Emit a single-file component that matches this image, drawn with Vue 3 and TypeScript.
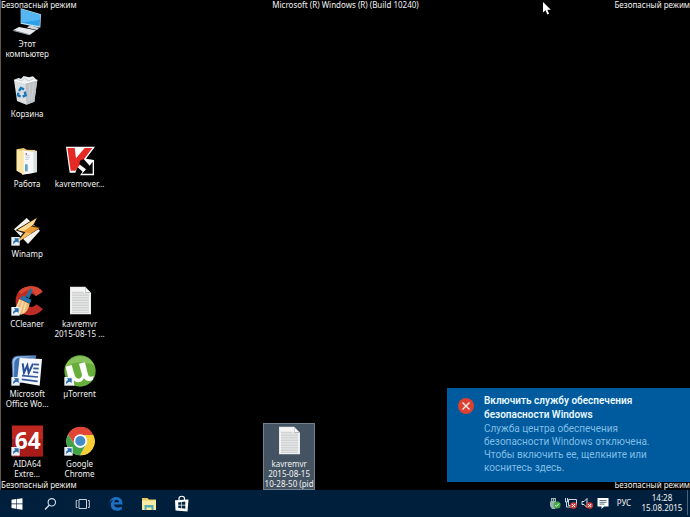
<script setup lang="ts">
type IconKind =
  | 'computer' | 'bin' | 'folder' | 'kaspersky' | 'winamp' | 'ccleaner'
  | 'text' | 'word' | 'utorrent' | 'aida' | 'chrome'

interface DesktopItem {
  icon: IconKind
  lines: string[]
  col: number
  row: number
  shortcut?: boolean
  selected?: boolean
}

const items: DesktopItem[] = [
  { icon: 'computer', lines: ['Этот', 'компьютер'], col: 1, row: 1 },
  { icon: 'bin', lines: ['Корзина'], col: 1, row: 2 },
  { icon: 'folder', lines: ['Работа'], col: 1, row: 3 },
  { icon: 'winamp', lines: ['Winamp'], col: 1, row: 4, shortcut: true },
  { icon: 'ccleaner', lines: ['CCleaner'], col: 1, row: 5, shortcut: true },
  { icon: 'word', lines: ['Microsoft', 'Office Wo...'], col: 1, row: 6, shortcut: true },
  { icon: 'aida', lines: ['AIDA64', 'Extre...'], col: 1, row: 7, shortcut: true },
  { icon: 'kaspersky', lines: ['kavremover...'], col: 2, row: 3 },
  { icon: 'text', lines: ['kavremvr', '2015-08-15 ...'], col: 2, row: 5 },
  { icon: 'utorrent', lines: ['µTorrent'], col: 2, row: 6, shortcut: true },
  { icon: 'chrome', lines: ['Google', 'Chrome'], col: 2, row: 7, shortcut: true },
  { icon: 'text', lines: ['kavremvr', '2015-08-15', '10-28-50 (pid'], col: 6, row: 7, selected: true },
]

const rules = [22, 27, 32, 37, 42, 47, 52, 57, 62, 67, 72, 77, 82]
</script>

<template>
  <div class="screen">
    <main class="desktop">
      <button
        v-for="item in items"
        :key="item.icon + item.col + item.row"
        type="button"
        class="item"
        :class="{ selected: item.selected }"
        :style="{ gridColumn: item.col, gridRow: item.row }"
      >
        <svg class="icon" viewBox="0 0 96 96" aria-hidden="true">
          <g v-if="item.icon === 'computer'">
            <path d="M29 10 90 28 88 68 29 56Z" fill="#c4e4f6" />
            <path d="M31 13 88 30 86 64 31 53Z" fill="#2f9fe8" />
            <path d="M31 13 88 30 86 44 31 53Z" fill="#54b7f3" />
            <path d="M56 61 66 63 84 69 78 75 48 68Z" fill="#cfd6da" />
            <path d="M7 75 24 66 75 76 56 90Z" fill="#e7ebed" />
            <path d="M7 75 56 88v3L7 78Z" fill="#9da7ad" />
          </g>
          <g v-else-if="item.icon === 'bin'">
            <path d="m10 14 12-5 8 2 8-8 16 4 12-3 12 12-8 12H20Z" fill="#edf0f2" />
            <path d="m17 13 14 5 10-8 12 8 14-7" fill="none" stroke="#c3c9ce" stroke-width="3" />
            <path d="m9 15 34 9 36-9-9 65-24 9-28-11Z" fill="#dce0e3" />
            <path d="m43 24 36-9-9 65-24 9Z" fill="#bcc2c6" />
            <path d="m9 15 34 9 36-9" fill="none" stroke="#fff" stroke-width="3" />
            <path d="m56 29-2 49M67 27l-5 47" stroke="#d0d4d7" stroke-width="3" />
            <g fill="none" stroke="#1976b9" stroke-width="7">
              <path d="m24 48 6-9 9 4" />
              <path d="m41 50 3 11-9 4" />
              <path d="m29 65-8-4 1-8" />
            </g>
          </g>
          <g v-else-if="item.icon === 'folder'">
            <path d="m17 13 21-4 9 5 26 1v67l-37 4-19-9Z" fill="#e8c974" />
            <path d="m40 22 38-5v65l-38 6Z" fill="#d9dfdf" />
            <path d="m33 16 34 4v64l-34 5Z" fill="#f5f8f8" />
            <path d="m17 13 21 8v68l-21-12Z" fill="#fbe6a5" />
            <path d="M43 31h13M43 37h13M43 43h10" stroke="#a5b7c3" stroke-width="2" />
            <path d="M42 58h8v21h-8Z" fill="#63a1c8" />
            <path d="M44 24h4v5h-4Z" fill="#be695d" />
          </g>
          <g v-else-if="item.icon === 'kaspersky'">
            <path d="M6 5h87L66 41l24 4v46H48l8-11-16-14-6 17H17Z" fill="#fff" />
            <path d="M10 9h22l4 31L62 9h23L34 77H20Z" fill="#e52a25" />
            <path d="m48 47 11-5 18 20 9-12v36H54l12-13-20-15Z" fill="#080808" />
          </g>
          <g v-else-if="item.icon === 'winamp'">
            <path d="M9 43 47 9l40 38-36 40Z" fill="#f5f3ed" />
            <path d="m80 5-67 41 23 8-27 35 82-52-24-5Z" fill="#2b1d10" />
            <path d="m77 10-57 35 24 7-28 32 69-45-27-5Z" fill="#e99c35" />
            <path d="m77 10-57 35 17 4 30-20Z" fill="#ffd892" />
            <path d="m44 52-28 32 45-29Z" fill="#f6bd65" />
          </g>
          <g v-else-if="item.icon === 'ccleaner'">
            <path d="M95 20C79-2 39-1 22 22c-17 25-7 61 24 67 20 5 39-3 50-17L76 58c-11 14-31 8-34-7-3-21 17-33 33-18Z" fill="#bd2d25" />
            <path d="M95 20C79-2 39-1 22 22l10 5C48 9 67 13 75 33Z" fill="#d94632" />
            <path d="m58 10 7 4-10 26-11-6Z" fill="#286c9c" />
            <path d="m37 32 24 12-4 12-31-15Z" fill="#1c75ae" />
            <path d="m24 42 32 14c-5 23-15 31-29 33L4 75c12-7 16-17 20-33Z" fill="#edba77" />
            <path d="m27 45-13 31m22-27L26 84m19-31-8 30" stroke="#ffe3b1" stroke-width="4" />
          </g>
          <g v-else-if="item.icon === 'text'">
            <path d="M18 5h46l17 18v65H18Z" fill="#e5e6e6" />
            <path d="M20 7h43v17h16v62H20Z" fill="#f4f4f4" />
            <path d="M63 5v19h18Z" fill="#b8bec1" />
            <path d="M65 9v12h12Z" fill="#fff" />
            <path
              v-for="y in rules"
              :key="y"
              :d="`M24 ${y}h${y < 25 ? 35 : 51}`"
              stroke="#b4b8ba"
              stroke-width="2"
            />
          </g>
          <g v-else-if="item.icon === 'word'">
            <path d="M2 20Q3 3 20 2L76 1 58 75 5 91Z" fill="#507eb7" />
            <path d="M5 20Q7 5 21 5L72 3 27 9 16 82 8 88Z" fill="#9fbfe6" />
            <path d="M10 24Q13 8 27 8L18 81 9 88Z" fill="#3e70b3" />
            <path d="m26 9 67 3-7 80-68-12Z" fill="#f5f8fd" />
            <path d="m35 25 4 28 10-22 4 23 13-28" fill="none" stroke="#284e99" stroke-width="6" />
            <path d="m68 28 16 1M67 40l16 1M66 51l16 2M33 62l48 4M32 73l48 6" stroke="#345a9c" stroke-width="5" />
          </g>
          <g v-else-if="item.icon === 'utorrent'">
            <circle cx="48" cy="48" r="47" fill="#68ae3b" />
            <path d="M4 38C13-3 76-9 91 32 66 17 29 17 4 38Z" fill="#87c15c" />
            <path d="m5 35 18-5 9 31c5 14 20 14 22-1l-9-34 18-4 8 33c2 12 9 12 18 8l-3 12c-12 7-22 2-26-6-7 16-23 16-31 6l2 18-14-5Z" fill="#fff" />
          </g>
          <g v-else-if="item.icon === 'aida'">
            <path d="M3 2h94v93H3Z" fill="#a71b18" />
            <path d="M3 2h94v40H3Z" fill="#bd2720" />
            <text x="50" y="71" text-anchor="middle" class="aida-text">64</text>
          </g>
          <g v-else>
            <circle cx="49" cy="49" r="42" fill="#e4e8ea" />
            <path d="M12 29A42 42 0 0 1 88 30H49A20 20 0 0 0 31 57Z" fill="#e04536" />
            <path d="M88 30A42 42 0 0 1 48 91L67 58A20 20 0 0 0 59 30Z" fill="#f9cf35" />
            <path d="M12 29A42 42 0 0 0 48 91L65 59A20 20 0 0 1 31 58Z" fill="#42a447" />
            <circle cx="49" cy="48" r="20" fill="#f6faf9" />
            <circle cx="49" cy="48" r="15" fill="#438bc9" />
          </g>
          <g v-if="item.shortcut">
            <path d="M1 66h25v26H1Z" fill="#e9f1f7" />
            <path d="M7 88c-2-8 1-12 6-12l-4-6h14v14l-5-4c-5 0-8 3-11 8Z" fill="#286aaa" />
          </g>
        </svg>
        <span class="label">
          <span v-for="line in item.lines" :key="line" class="line">{{ line }}</span>
        </span>
      </button>

      <span class="mark top left">Безопасный режим</span>
      <span class="mark top center">Microsoft (R) Windows (R) (Build 10240)</span>
      <span class="mark top right">Безопасный режим</span>
      <span class="mark bottom left">Безопасный режим</span>
      <span class="mark bottom right">Безопасный режим</span>

      <section class="toast" role="alert">
        <svg class="toast-icon" viewBox="0 0 16 16" aria-hidden="true">
          <circle cx="8" cy="8" r="8" fill="#dc4034" />
          <path d="m4.500 4.500 7 7m0-7-7 7" stroke="#fff0e8" stroke-width="1.400" />
        </svg>
        <div>
          <h1 class="toast-title">Включить службу обеспечения<br />безопасности Windows</h1>
          <p class="toast-body">Служба центра обеспечения<br />безопасности Windows отключена.<br />Чтобы включить ее, щелкните или<br />коснитесь здесь.</p>
        </div>
      </section>

      <svg class="cursor" viewBox="0 0 8 13" aria-hidden="true">
        <path d="M0 0v10.500l2.500-2.200L4.300 12.500l1.800-.8-1.800-4H7.800Z" fill="#fff" />
      </svg>
    </main>

    <footer class="taskbar">
      <nav class="apps">
        <button type="button" class="task" aria-label="Пуск">
          <svg viewBox="0 0 18 18"><path d="m3.500 4.800 4.600-.7v4.500H3.500Zm5.200-.8 5.800-.8v5.400H8.700ZM3.500 9.200h4.600v4.600l-4.600-.7Zm5.200 0h5.800v5.500l-5.800-.8Z" fill="#fff" /></svg>
        </button>
        <button type="button" class="task" aria-label="Поиск">
          <svg viewBox="0 0 18 18"><path d="M8.200 10.200 4 14.500" stroke="#d9e3eb" stroke-width="1.300" /><circle cx="10.800" cy="7.300" r="3.700" fill="none" stroke="#d9e3eb" stroke-width="1.100" /></svg>
        </button>
        <button type="button" class="task" aria-label="Представление задач">
          <svg viewBox="0 0 18 18"><path d="M5 4.500h7.500v9H5ZM3.500 5.500H2.200v7h1.300M14 5.500h1.300v7H14" fill="none" stroke="#c6d2dc" /></svg>
        </button>
        <button type="button" class="task" aria-label="Edge">
          <svg viewBox="0 0 18 18"><path d="M2.300 8.500C2.800 4.500 5.500 2 9.200 2c4.300 0 6.500 3 6.300 7.500H7c.3 3.500 4.500 3.800 7.800 2v3c-5.500 2.800-11 .5-11-4.500 0-2.500 1.200-4.300 3.200-5.200C4.500 5 3.200 6.300 2.300 8.500Zm4.800-1.300h4.800C11.800 4 7.800 4 7.100 7.200Z" fill="#1f6fc0" /></svg>
        </button>
        <button type="button" class="task" aria-label="Проводник">
          <svg viewBox="0 0 18 18"><path d="M2 3h5.500L9 4.500h7V15H2Z" fill="#e5c967" /><path d="M2 5.500h14V15H2Z" fill="#faeba4" /><path d="M4.500 10h9v5h-2v-2.500h-5V15h-2Z" fill="#54aeb4" /></svg>
        </button>
        <button type="button" class="task" aria-label="Магазин">
          <svg viewBox="0 0 18 18"><path d="M6 5.500V3.500c0-3 5.500-3 5.500 0V5" fill="none" stroke="#fff" stroke-width="1.200" /><path d="m2 5.300 13.500-.8-1 12-12-1Z" fill="#fff" /><path d="m5.200 7.500 3-.4v2.700h-3Zm3.600-.5 3.500-.4v3.200H8.800Zm-3.600 3.400h3v2.800l-3-.4Zm3.600 0h3.500v3.300l-3.500-.4Z" fill="#052744" /></svg>
        </button>
      </nav>
      <div class="tray">
        <button type="button" class="status" aria-label="Безопасное извлечение устройства">
          <svg viewBox="0 0 12 12"><path d="M2 1h5v4l1 1v4L6 12H3L1 9V5l1-1Z" fill="#9eb3b1" /><path d="M3 2h1v2H3Zm2 0h1v2H5Z" fill="#304958" /><circle cx="8" cy="8" r="3.500" fill="#43a948" /><path d="m6.200 8 1.300 1.500 2.500-3" fill="none" stroke="#d4f0ce" /></svg>
        </button>
        <button type="button" class="status" aria-label="Сеть">
          <svg viewBox="0 0 12 12"><path d="M3.500 2.500h8v6h-8ZM.5 1v4h2V1M1.500 5v5H6" fill="none" stroke="#cad7df" /><circle cx="8.500" cy="8.500" r="3.300" fill="#d83d3b" /><path d="m7 7 3 3m0-3-3 3" stroke="#fff" /></svg>
        </button>
        <button type="button" class="status" aria-label="Громкость">
          <svg viewBox="0 0 12 12"><path d="M1 4.500h2l3-3v9l-3-3H1Z" fill="none" stroke="#dce5eb" /><circle cx="8.700" cy="8.500" r="3.300" fill="#d83d3b" /><path d="m7.200 7 3 3m0-3-3 3" stroke="#fff" /></svg>
        </button>
        <button type="button" class="status" aria-label="Центр уведомлений">
          <svg viewBox="0 0 12 12"><path d="M.5 1h11v8.500H7L4.500 12V9.500h-4Z" fill="#fff" /><path d="M2.500 3.500h7M2.500 5.300h7M2.500 7.100h5" stroke="#31506a" stroke-width=".8" /></svg>
        </button>
        <button type="button" class="lang">РУС</button>
        <button type="button" class="clock"><span>14:28</span><span>15.08.2015</span></button>
        <button type="button" class="peek" aria-label="Свернуть все окна"></button>
      </div>
    </footer>
  </div>
</template>

<style>
body {
  background: #000;
}
</style>

<style scoped>
.screen {
  display: flex;
  flex-direction: column;
  min-height: 100vh;
  font-family: "Noto Sans", "Open Sans", sans-serif;
  font-size: 8px;
  line-height: 10px;
  color: #f2f2f2;
  background: #000;
  overflow: hidden;
}

button {
  margin: 0;
  padding: 0;
  border: 0;
  background: none;
  color: inherit;
  font: inherit;
}

.desktop {
  position: relative;
  flex: 1;
  display: grid;
  grid-template-columns: repeat(13, minmax(0, 1fr));
  grid-template-rows: repeat(6, 70px) 67px;
  align-content: start;
  padding: 3px 8px 0 0;
  border-left: 1px solid #62564a;
}

.item {
  display: flex;
  flex-direction: column;
  align-items: center;
  gap: 2px;
  padding-top: 2px;
  min-width: 0;
}

.item.selected {
  padding-top: 1px;
  border: 1px solid #74828f;
  background: #435362;
}

.icon {
  flex: none;
  width: 32px;
  height: 32px;
}

.aida-text {
  font: bold 68px "Open Sans", sans-serif;
  fill: #fff;
}

.label {
  display: flex;
  flex-direction: column;
  text-align: center;
  white-space: nowrap;
}

.mark {
  position: absolute;
  white-space: nowrap;
}

.top {
  top: 0;
}

.bottom {
  bottom: 0;
}

.left {
  left: 0;
}

.right {
  right: 0;
}

.center {
  left: 0;
  right: 0;
  text-align: center;
}

.toast {
  position: absolute;
  right: 0;
  bottom: 8px;
  display: flex;
  gap: 10px;
  box-sizing: border-box;
  width: 243px;
  padding: 6px 8px 8px 11px;
  background: #005a9e;
}

.toast-icon {
  flex: none;
  width: 16px;
  height: 16px;
  margin-top: 4px;
}

.toast-title,
.toast-body {
  margin: 0;
  font-family: Roboto, "Open Sans", sans-serif;
  font-size: 10px;
  white-space: nowrap;
}

.toast-title {
  font-weight: 600;
  line-height: 14px;
  color: #e9f8ff;
}

.toast-body {
  line-height: 13px;
  color: #80bde5;
}

.cursor {
  position: absolute;
  top: 2px;
  left: 542px;
  width: 8px;
  height: 13px;
}

.taskbar {
  display: flex;
  justify-content: space-between;
  height: 27px;
  background: #001f3c;
}

.apps,
.tray {
  display: flex;
}

.tray {
  padding-bottom: 2px;
}

.task {
  display: grid;
  place-items: center;
  width: 33px;
}

.task svg {
  width: 18px;
  height: 18px;
}

.status {
  display: grid;
  place-items: center;
  width: 16px;
}

.status svg {
  width: 12px;
  height: 12px;
}

.lang {
  width: 26px;
}

.clock {
  display: flex;
  flex-direction: column;
  justify-content: center;
  align-items: center;
  width: 50px;
}

.peek {
  width: 3px;
  border-left: 1px solid #48647b;
}
</style>
